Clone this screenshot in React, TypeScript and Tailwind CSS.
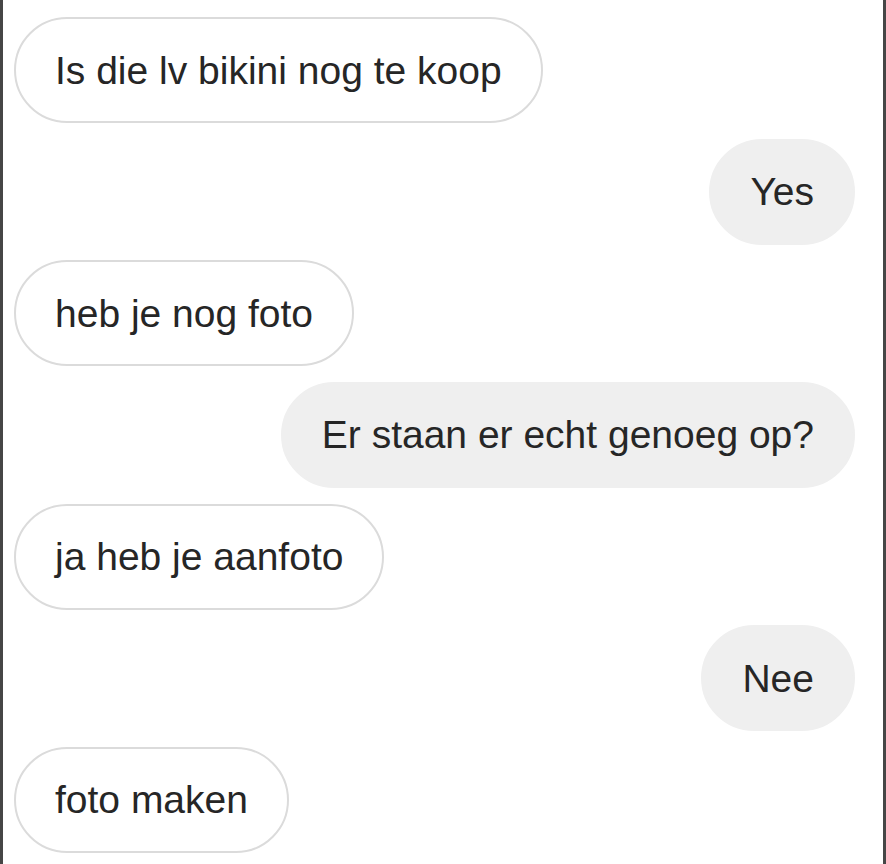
import React from 'react';

type Message = {
    text: string;
    mine: boolean;
};

const messages: Message[] = [
    { text: 'Is die lv bikini nog te koop', mine: false },
    { text: 'Yes', mine: true },
    { text: 'heb je nog foto', mine: false },
    { text: 'Er staan er echt genoeg op?', mine: true },
    { text: 'ja heb je aanfoto', mine: false },
    { text: 'Nee', mine: true },
    { text: 'foto maken', mine: false },
];

const Bubble: React.FC<{ message: Message }> = ({ message }) => (
    <div className={`flex ${message.mine ? 'justify-end' : 'justify-start'}`}>
        <div
            className={`h-[106px] flex items-center px-[39px] rounded-full text-[39px] leading-none text-[#262626] whitespace-nowrap
                ${message.mine
                    ? 'bg-[#efefef] border-2 border-[#efefef]'
                    : 'bg-white border-2 border-[#dbdbdb]'
                }`}
        >
            {message.text}
        </div>
    </div>
);

const App: React.FC = () => {
    return (
        <div
            className="w-[886px] h-[864px] overflow-hidden bg-white border-l-[3px] border-r-[3px] border-[#464646] pl-[11px] pr-[28px] pt-[17px] flex flex-col gap-[15.67px]"
            style={{ fontFamily: '"Liberation Sans", Arial, sans-serif' }}
        >
            {messages.map((m, i) => (
                <Bubble key={i} message={m} />
            ))}
        </div>
    );
};

export default App;
